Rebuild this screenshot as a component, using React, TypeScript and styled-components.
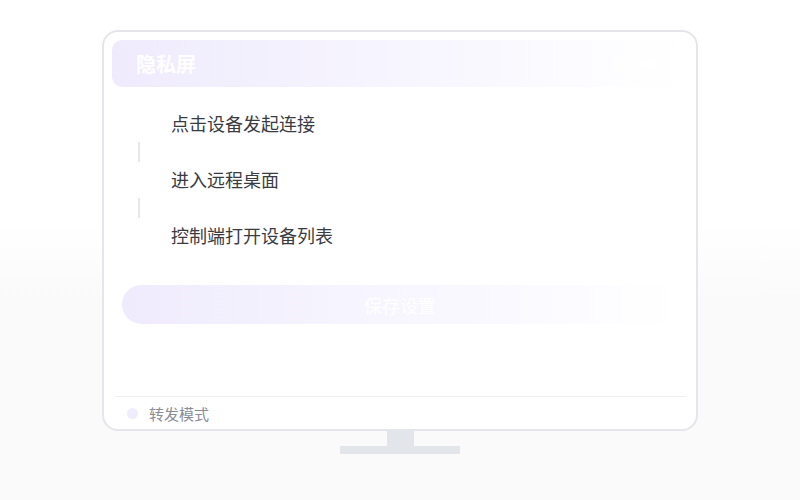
import styled, { createGlobalStyle } from 'styled-components'

const GlobalStyle = createGlobalStyle`
  html, body {
    margin: 0;
    padding: 0;
  }
  body {
    font-family: "Noto Sans CJK SC", "Noto Sans", sans-serif;
    background: #fff;
  }
  #root {
    height: 500px;
  }
`

const steps = ['点击设备发起连接', '进入远程桌面', '控制端打开设备列表']

export default function App() {
  return (
    <>
      <GlobalStyle />
      <Page>
        <Monitor>
          <Screen>
            <Header>
              <HeaderTitle>隐私屏</HeaderTitle>
              <HeaderSwitch />
            </Header>
            <StepList>
              {steps.map((step, i) => (
                <StepItem key={step}>
                  <StepRow>
                    <StepDot />
                    <StepText>{step}</StepText>
                  </StepRow>
                  {i < steps.length - 1 && <Connector />}
                </StepItem>
              ))}
            </StepList>
            <SaveButton>保存设置</SaveButton>
            <Spacer />
            <Footer>
              <ModeDot />
              <ModeText>转发模式</ModeText>
            </Footer>
          </Screen>
          <Neck />
          <Base />
        </Monitor>
      </Page>
    </>
  )
}

const Page = styled.div`
  height: 500px;
  display: flex;
  justify-content: center;
  padding-top: 30px;
  box-sizing: border-box;
  background: linear-gradient(180deg, #ffffff 0%, #ffffff 45%, #fafafb 60%, #fafafb 100%);
`

const Monitor = styled.div`
  display: flex;
  flex-direction: column;
  align-items: center;
`

const Screen = styled.div`
  width: 596px;
  height: 401px;
  box-sizing: border-box;
  border: 2px solid #e4e6eb;
  border-radius: 16px;
  background: #fff;
  display: flex;
  flex-direction: column;
  padding: 8px 10px 0 8px;
`

const Header = styled.div`
  height: 47px;
  border-radius: 10px;
  background: linear-gradient(90deg, #efebfd 0%, #f6f4fe 45%, #fcfbff 80%, rgba(255, 255, 255, 0) 100%);
  display: flex;
  align-items: center;
  justify-content: space-between;
  padding: 0 28px 0 24px;
`

const HeaderTitle = styled.span`
  font-size: 20px;
  font-weight: 700;
  color: #ffffff;
  line-height: 1;
`

const HeaderSwitch = styled.span`
  width: 46px;
  height: 12px;
  border-radius: 6px;
  background: #ffffff;
  opacity: 0.5;
`

const StepList = styled.div`
  display: flex;
  flex-direction: column;
  margin-top: 21px;
  padding-left: 22px;
`

const StepItem = styled.div`
  display: flex;
  flex-direction: column;
`

const StepRow = styled.div`
  display: flex;
  align-items: center;
  height: 30px;
`

const StepDot = styled.span`
  width: 10px;
  height: 10px;
  border-radius: 50%;
  background: #ffffff;
  margin-right: 27px;
`

const StepText = styled.span`
  font-size: 18px;
  color: #3a3c42;
  line-height: 30px;
`

const Connector = styled.span`
  width: 2px;
  height: 20px;
  margin: 4px 0 2px 4px;
  background: #e6e7ee;
`

const SaveButton = styled.button`
  margin: 35px 8px 0 10px;
  height: 39px;
  border: none;
  border-radius: 20px;
  background: linear-gradient(90deg, #efebfd 0%, #f6f4fe 40%, #fbfaff 75%, rgba(255, 255, 255, 0) 100%);
  color: #ffffff;
  font-family: inherit;
  font-size: 18px;
  cursor: pointer;
`

const Spacer = styled.div`
  flex: 1;
`

const Footer = styled.div`
  height: 32px;
  margin: 0 0 0 3px;
  border-top: 1px solid #eeeff3;
  display: flex;
  align-items: center;
  padding-left: 12px;
`

const ModeDot = styled.span`
  width: 11px;
  height: 11px;
  border-radius: 50%;
  background: #efecfd;
  margin-right: 11px;
`

const ModeText = styled.span`
  font-size: 15px;
  color: #8a8d96;
`

const Neck = styled.div`
  width: 27px;
  height: 15px;
  background: #e2e5e9;
`

const Base = styled.div`
  width: 120px;
  height: 8px;
  background: #e2e5e9;
`
